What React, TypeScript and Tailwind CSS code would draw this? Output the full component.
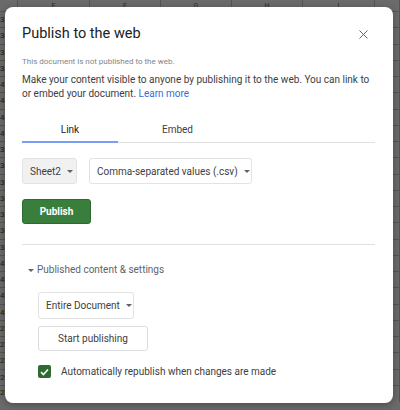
import React from "react";

const COLS = [18, 72, 71, 71, 71, 72, 25];
const LETTERS = ["", "E", "F", "G", "H", "I", ""];
const ROW_NUMS = ["31.2", "38.4", "33.1", "34.5", "41.2", "44.0", "44.6", "41.3", "33.8", "38.2", "39.5", "38.1", "33.3", "38.4", "34.2", "41.1", "42.5", "42.0", "42.2", "26.1", "21.3", "22.4", "20.1"];
const LAST = ["20.5", "55", "15.6", "26.5", "22.1", "17.1", ""];

function Caret() {
  return (
    <svg width="6" height="3" viewBox="0 0 6 3" className="shrink-0">
      <path d="M0 0h6L3 3z" fill="#5f6368" />
    </svg>
  );
}

function Sheet() {
  return (
    <div className="w-[400px] h-[410px] overflow-hidden bg-[#6b6b6b] font-['Roboto',sans-serif] text-[#1e1e1e]">
      <div className="flex h-[12px] border-b border-[#555]">
        {COLS.map((w, i) => (
          <div key={i} style={{ width: w }} className="shrink-0 border-r border-[#555] text-[7px] leading-[12px] text-center text-[#2a2a2a]">
            {LETTERS[i]}
          </div>
        ))}
      </div>
      {ROW_NUMS.map((n, r) => (
        <div key={r} className="flex h-[16.25px] border-b border-[#555]">
          {COLS.map((w, i) => (
            <div key={i} style={{ width: w }} className="shrink-0 border-r border-[#555] text-[8px] leading-[16px] text-right pr-[2px]">
              {i === 0 ? n : i === 6 && r === 0 ? <span className="block text-left pl-[2px]">T</span> : ""}
            </div>
          ))}
        </div>
      ))}
      <div className="flex h-[16px]">
        {COLS.map((w, i) => (
          <div key={i} style={{ width: w }} className="shrink-0 border-r border-[#555] text-[8px] leading-[14px] text-right pr-[6px]">
            {LAST[i]}
          </div>
        ))}
      </div>
    </div>
  );
}

export default function App() {
  return (
    <div className="relative w-[400px] h-[410px] overflow-hidden">
      <Sheet />
      <div className="absolute left-[5px] top-[7px] w-[388px] h-[396px] bg-white rounded-[8px] shadow-[0_2px_8px_rgba(0,0,0,0.3)] font-['Roboto',sans-serif] pl-[17px] pr-[18px] pt-[17px]">
        <div className="flex items-center justify-between h-[20px]">
          <div className="text-[14.5px] leading-[20px] text-[#202124]">Publish to the web</div>
          <svg width="9" height="9" viewBox="0 0 9 9" className="mr-[7px]">
            <path d="M0.5 0.5L8.5 8.5M8.5 0.5L0.5 8.5" stroke="#5f6368" strokeWidth="1" />
          </svg>
        </div>
        <div className="mt-[12.5px] text-[8px] leading-[10px] text-[#80868b]">
          This document is not published to the web.
        </div>
        <div className="mt-[6.5px] text-[10px] leading-[14px] text-[#3c4043]">
          Make your content visible to anyone by publishing it to the web. You can link to or embed your document.{" "}
          <span className="text-[#3b6bd6]">Learn more</span>
        </div>
        <div className="mt-[22px] flex border-b border-[#e0e0e0]">
          <div className="w-[96px] text-center text-[10px] leading-[14px] text-[#202124] pb-[4px] border-b-2 border-[#7b9df3] -mb-px">
            Link
          </div>
          <div className="w-[119px] text-center text-[10px] leading-[14px] text-[#3c4043] pb-[4px]">
            Embed
          </div>
        </div>
        <div className="mt-[15px] flex gap-[12px]">
          <div className="h-[26px] w-[55px] flex items-center gap-[6px] pl-[7px] rounded-[3px] border border-[#e3e3e3] bg-[#f1f1f1] text-[10px] text-[#3c4043]">
            Sheet2 <Caret />
          </div>
          <div className="h-[26px] w-[163px] flex items-center gap-[6px] pl-[7px] rounded-[3px] border border-[#e3e3e3] bg-white text-[10px] text-[#3c4043]">
            Comma-separated values (.csv) <Caret />
          </div>
        </div>
        <div className="mt-[15px] h-[25px] w-[69px] flex items-center justify-center rounded-[3px] border border-[#2d6a30] bg-[#3a7e3d] text-white text-[10px] font-bold">
          Publish
        </div>
        <div className="mt-[19.5px] h-px bg-[#e0e0e0]" />
        <div className="mt-[18.5px] flex items-center gap-[3px] pl-[6px] text-[10px] leading-[14px] text-[#5f6368]">
          <Caret />
          <span>Published content &amp; settings</span>
        </div>
        <div className="pl-[16px]">
          <div className="mt-[15px] h-[26.5px] w-[96px] flex items-center gap-[6px] pl-[7px] rounded-[3px] border border-[#e3e3e3] bg-white text-[10px] text-[#3c4043]">
            Entire Document <Caret />
          </div>
          <div className="mt-[7px] h-[25px] w-[110px] flex items-center justify-center rounded-[3px] border border-[#dadce0] bg-white text-[10px] text-[#3c4043]">
            Start publishing
          </div>
          <div className="mt-[14px] flex items-center gap-[10px]">
            <div className="w-[13px] h-[13px] rounded-[2px] bg-[#2e6b31] flex items-center justify-center">
              <svg width="9" height="8" viewBox="0 0 9 8">
                <path d="M1 4.2L3.4 6.5L8 1.5" stroke="white" strokeWidth="1.6" fill="none" />
              </svg>
            </div>
            <span className="text-[10px] leading-[14px] text-[#3c4043]">Automatically republish when changes are made</span>
          </div>
        </div>
      </div>
    </div>
  );
}
